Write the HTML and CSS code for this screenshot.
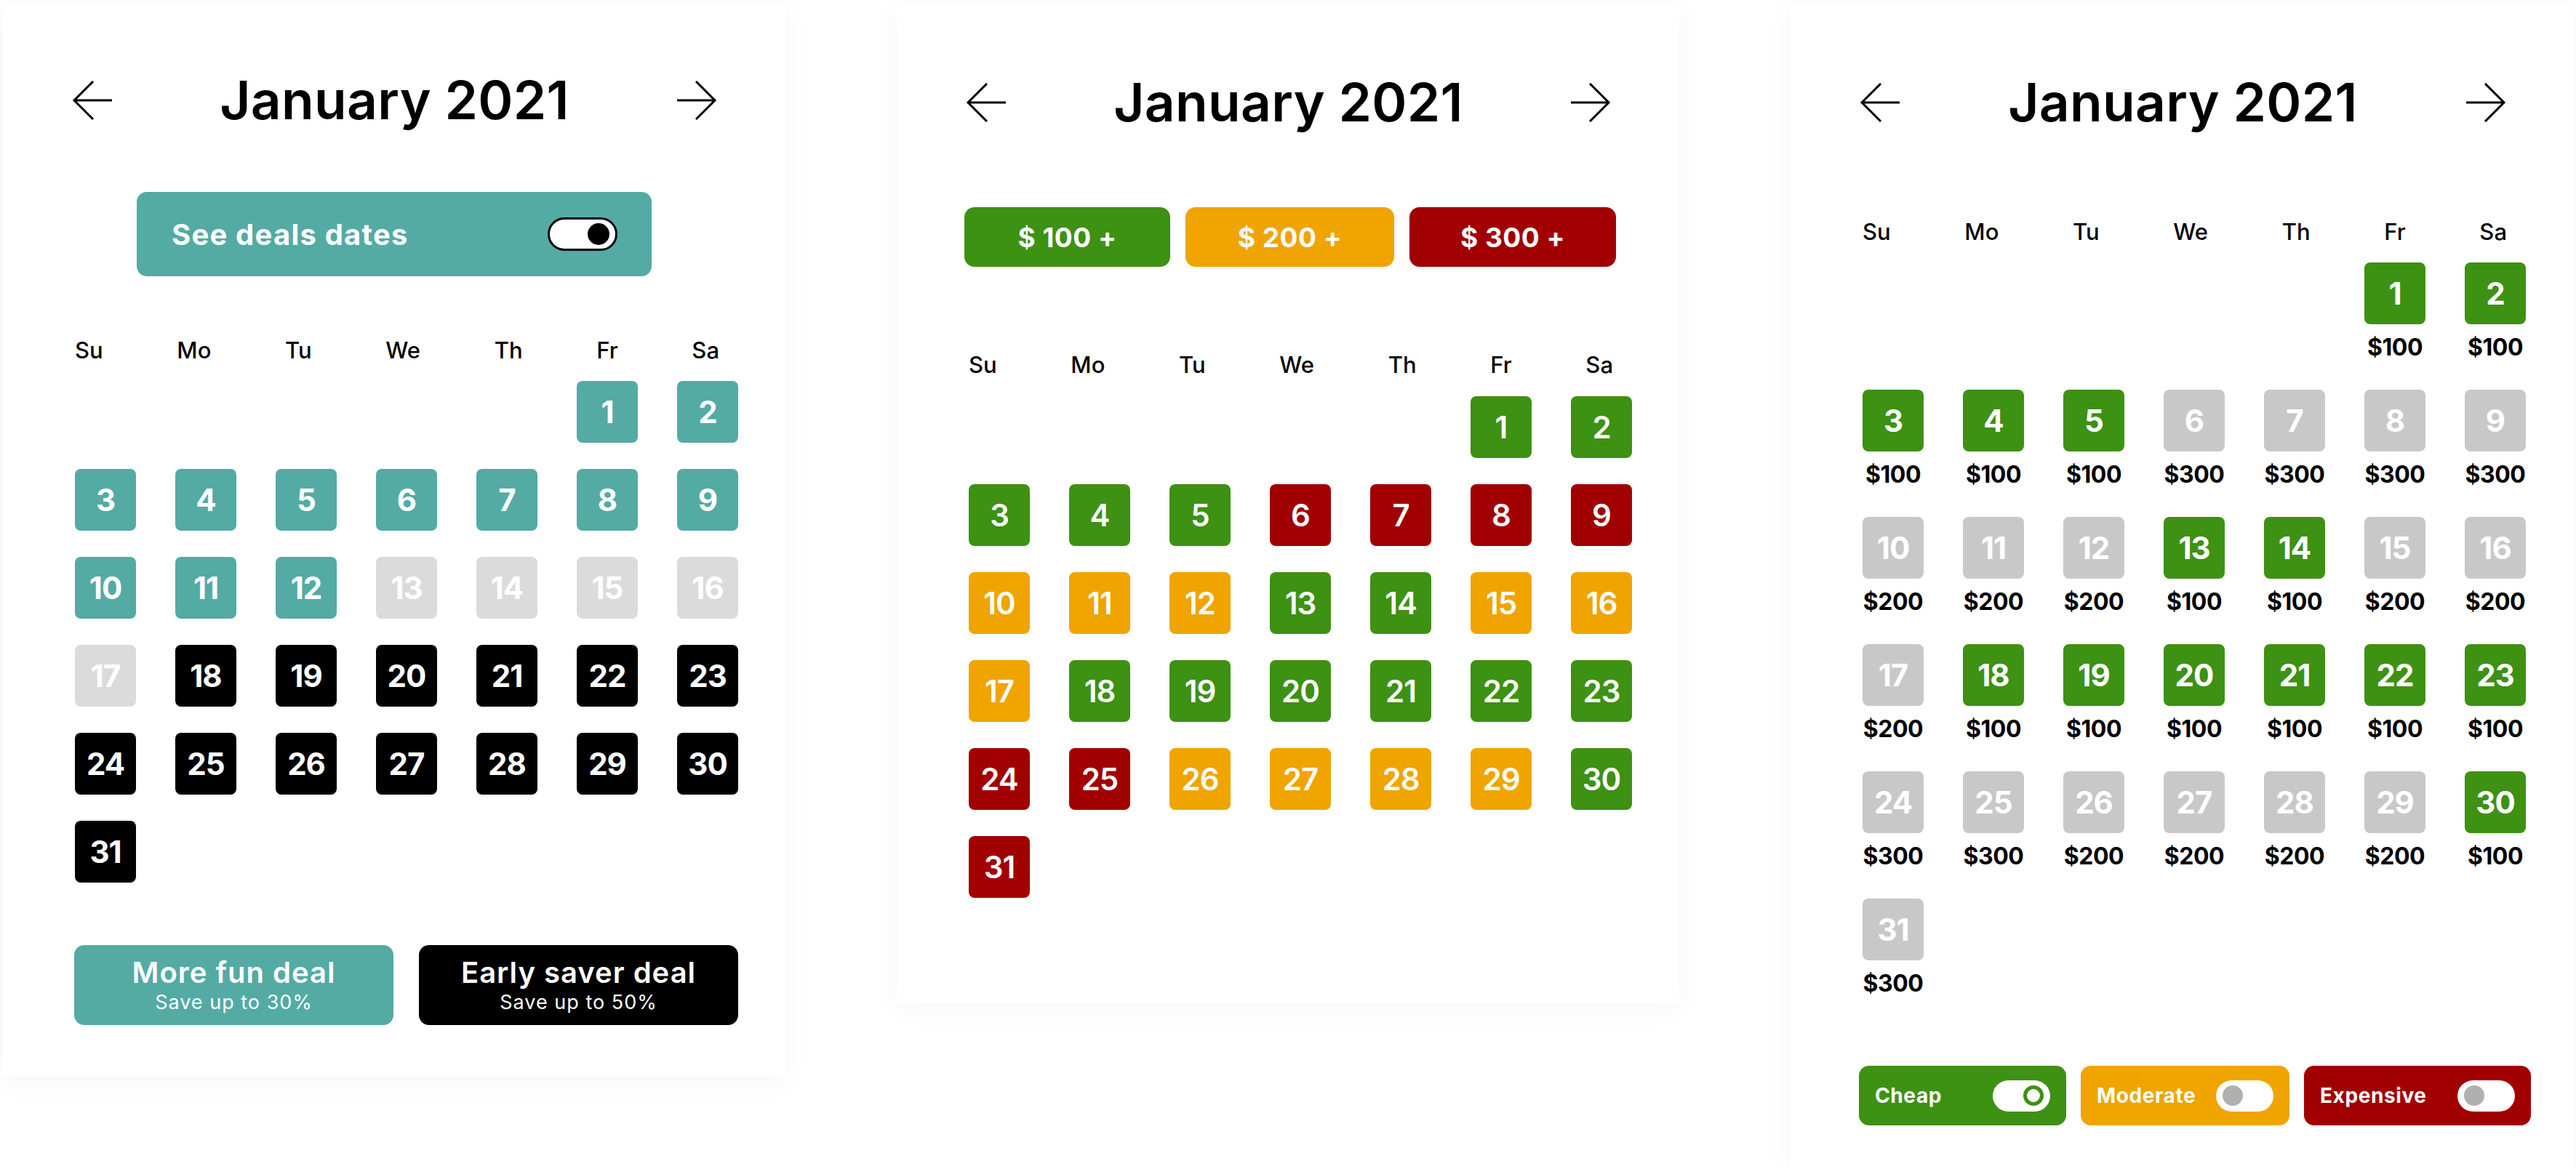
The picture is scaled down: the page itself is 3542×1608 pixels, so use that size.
FILE: index.html
```html
<!DOCTYPE html>
<html lang="en">
<head>
<meta charset="utf-8">
<title>Calendars</title>
<link rel="stylesheet" href="styles.css">
</head>
<body>
<div class="board">

  <!-- Panel 1 : deals -->
  <section class="panel panel-deals">
    <header class="cal-head">
      <svg class="arrow" viewBox="0 0 56 54" width="56" height="54"><path d="M55 27H3M29 1L3 27L29 53"/></svg>
      <h1 class="cal-title">January 2021</h1>
      <svg class="arrow" viewBox="0 0 56 54" width="56" height="54"><path d="M1 27H53M27 1L53 27L27 53"/></svg>
    </header>

    <div class="deal-banner">
      <span class="deal-banner-text">See deals dates</span>
      <span class="switch-dark"><span class="switch-dark-knob"></span></span>
    </div>

    <div class="weekdays"><span>Su</span><span>Mo</span><span>Tu</span><span>We</span><span>Th</span><span>Fr</span><span>Sa</span></div>

    <div class="days days-deals">
      <span class="day teal first">1</span><span class="day teal">2</span>
      <span class="day teal">3</span><span class="day teal">4</span><span class="day teal">5</span><span class="day teal">6</span><span class="day teal">7</span><span class="day teal">8</span><span class="day teal">9</span>
      <span class="day teal">10</span><span class="day teal">11</span><span class="day teal">12</span><span class="day light">13</span><span class="day light">14</span><span class="day light">15</span><span class="day light">16</span>
      <span class="day light">17</span><span class="day black">18</span><span class="day black">19</span><span class="day black">20</span><span class="day black">21</span><span class="day black">22</span><span class="day black">23</span>
      <span class="day black">24</span><span class="day black">25</span><span class="day black">26</span><span class="day black">27</span><span class="day black">28</span><span class="day black">29</span><span class="day black">30</span>
      <span class="day black">31</span>
    </div>

    <div class="deal-buttons">
      <div class="deal-btn teal"><span class="deal-btn-title">More fun deal</span><span class="deal-btn-sub">Save up to 30%</span></div>
      <div class="deal-btn black"><span class="deal-btn-title">Early saver deal</span><span class="deal-btn-sub">Save up to 50%</span></div>
    </div>
  </section>

  <!-- Panel 2 : price colours -->
  <section class="panel panel-prices">
    <header class="cal-head">
      <svg class="arrow" viewBox="0 0 56 54" width="56" height="54"><path d="M55 27H3M29 1L3 27L29 53"/></svg>
      <h1 class="cal-title">January 2021</h1>
      <svg class="arrow" viewBox="0 0 56 54" width="56" height="54"><path d="M1 27H53M27 1L53 27L27 53"/></svg>
    </header>

    <div class="price-tabs">
      <span class="price-tab green">$ 100 +</span>
      <span class="price-tab orange">$ 200 +</span>
      <span class="price-tab red">$ 300 +</span>
    </div>

    <div class="weekdays"><span>Su</span><span>Mo</span><span>Tu</span><span>We</span><span>Th</span><span>Fr</span><span>Sa</span></div>

    <div class="days days-prices">
      <span class="day green first">1</span><span class="day green">2</span>
      <span class="day green">3</span><span class="day green">4</span><span class="day green">5</span><span class="day red">6</span><span class="day red">7</span><span class="day red">8</span><span class="day red">9</span>
      <span class="day orange">10</span><span class="day orange">11</span><span class="day orange">12</span><span class="day green">13</span><span class="day green">14</span><span class="day orange">15</span><span class="day orange">16</span>
      <span class="day orange">17</span><span class="day green">18</span><span class="day green">19</span><span class="day green">20</span><span class="day green">21</span><span class="day green">22</span><span class="day green">23</span>
      <span class="day red">24</span><span class="day red">25</span><span class="day orange">26</span><span class="day orange">27</span><span class="day orange">28</span><span class="day orange">29</span><span class="day green">30</span>
      <span class="day red">31</span>
    </div>
  </section>

  <!-- Panel 3 : prices under days -->
  <section class="panel panel-filter">
    <header class="cal-head">
      <svg class="arrow" viewBox="0 0 56 54" width="56" height="54"><path d="M55 27H3M29 1L3 27L29 53"/></svg>
      <h1 class="cal-title">January 2021</h1>
      <svg class="arrow" viewBox="0 0 56 54" width="56" height="54"><path d="M1 27H53M27 1L53 27L27 53"/></svg>
    </header>

    <div class="weekdays"><span>Su</span><span>Mo</span><span>Tu</span><span>We</span><span>Th</span><span>Fr</span><span>Sa</span></div>

    <div class="days days-filter">
      <div class="pday first"><span class="day green">1</span><span class="price">$100</span></div>
      <div class="pday"><span class="day green">2</span><span class="price">$100</span></div>
      <div class="pday"><span class="day green">3</span><span class="price">$100</span></div>
      <div class="pday"><span class="day green">4</span><span class="price">$100</span></div>
      <div class="pday"><span class="day green">5</span><span class="price">$100</span></div>
      <div class="pday"><span class="day grey">6</span><span class="price">$300</span></div>
      <div class="pday"><span class="day grey">7</span><span class="price">$300</span></div>
      <div class="pday"><span class="day grey">8</span><span class="price">$300</span></div>
      <div class="pday"><span class="day grey">9</span><span class="price">$300</span></div>
      <div class="pday"><span class="day grey">10</span><span class="price">$200</span></div>
      <div class="pday"><span class="day grey">11</span><span class="price">$200</span></div>
      <div class="pday"><span class="day grey">12</span><span class="price">$200</span></div>
      <div class="pday"><span class="day green">13</span><span class="price">$100</span></div>
      <div class="pday"><span class="day green">14</span><span class="price">$100</span></div>
      <div class="pday"><span class="day grey">15</span><span class="price">$200</span></div>
      <div class="pday"><span class="day grey">16</span><span class="price">$200</span></div>
      <div class="pday"><span class="day grey">17</span><span class="price">$200</span></div>
      <div class="pday"><span class="day green">18</span><span class="price">$100</span></div>
      <div class="pday"><span class="day green">19</span><span class="price">$100</span></div>
      <div class="pday"><span class="day green">20</span><span class="price">$100</span></div>
      <div class="pday"><span class="day green">21</span><span class="price">$100</span></div>
      <div class="pday"><span class="day green">22</span><span class="price">$100</span></div>
      <div class="pday"><span class="day green">23</span><span class="price">$100</span></div>
      <div class="pday"><span class="day grey">24</span><span class="price">$300</span></div>
      <div class="pday"><span class="day grey">25</span><span class="price">$300</span></div>
      <div class="pday"><span class="day grey">26</span><span class="price">$200</span></div>
      <div class="pday"><span class="day grey">27</span><span class="price">$200</span></div>
      <div class="pday"><span class="day grey">28</span><span class="price">$200</span></div>
      <div class="pday"><span class="day grey">29</span><span class="price">$200</span></div>
      <div class="pday"><span class="day green">30</span><span class="price">$100</span></div>
      <div class="pday"><span class="day grey">31</span><span class="price">$300</span></div>
    </div>

    <div class="filters">
      <div class="filter green filter-cheap"><span>Cheap</span><span class="switch-light on"><span class="switch-light-knob"></span></span></div>
      <div class="filter orange filter-moderate"><span>Moderate</span><span class="switch-light"><span class="switch-light-knob"></span></span></div>
      <div class="filter red filter-expensive"><span>Expensive</span><span class="switch-light"><span class="switch-light-knob"></span></span></div>
    </div>
  </section>

</div>
</body>
</html>
```

FILE: styles.css
```css
* { box-sizing: border-box; }

html, body {
  margin: 0;
  padding: 0;
  background: #ffffff;
}

body {
  font-family: "Inter", "Noto Sans", "Liberation Sans", sans-serif;
  color: #000;
}

.board {
  display: flex;
  align-items: flex-start;
  gap: 153px;
  padding: 5px 0 0 4px;
}

.panel {
  width: 1076px;
  background: #fff;
  box-shadow: 0 6px 36px rgba(0, 0, 0, 0.045);
  display: flex;
  flex-direction: column;
}

.panel-deals { padding: 88px 0 71px 0; }
.panel-prices { padding: 91px 0 145px 0; }
.panel-filter { padding: 91px 0 58px 0; width: 1078px; }

/* header */
.cal-head {
  display: flex;
  align-items: center;
  justify-content: space-between;
  height: 90px;
  padding: 0 94px 0 95px;
}

.arrow {
  fill: none;
  stroke: #000;
  stroke-width: 3;
  stroke-linecap: butt;
  stroke-linejoin: miter;
  flex: none;
}

.cal-title {
  margin: 0;
  font-size: 73px;
  line-height: 90px;
  font-weight: 600;
  letter-spacing: 0.3px;
}

/* deal banner */
.deal-banner {
  align-self: center;
  margin-top: 81px;
  width: 708px;
  height: 116px;
  border-radius: 14px;
  background: #53aba4;
  display: flex;
  align-items: center;
  justify-content: space-between;
  padding: 0 47px 0 48px;
}

.deal-banner-text {
  color: #fff;
  font-size: 40px;
  font-weight: 700;
  letter-spacing: 1.2px;
}

.switch-dark {
  width: 96px;
  height: 46px;
  border: 3.5px solid #000;
  border-radius: 23px;
  background: #fff;
  display: flex;
  align-items: center;
  justify-content: flex-end;
  padding-right: 8px;
}

.switch-dark-knob {
  width: 30px;
  height: 30px;
  border-radius: 50%;
  background: #000;
}

/* weekdays */
.weekdays {
  width: 886px;
  margin-left: 99px;
  display: flex;
  justify-content: space-between;
  font-size: 31px;
  line-height: 36px;
  font-weight: 500;
}

.panel-deals .weekdays { margin-top: 84px; }
.panel-prices .weekdays { margin-top: 117px; }
.panel-filter .weekdays { margin-top: 115px; }

/* day grid */
.days {
  margin-left: 99px;
  display: grid;
  grid-template-columns: repeat(7, 84px);
  column-gap: 54px;
  row-gap: 36px;
}

.days-deals { margin-top: 24px; }
.days-prices { margin-top: 25px; }
.days-filter { margin-top: 24px; row-gap: 38px; }

.first { grid-column-start: 6; }

.day {
  width: 84px;
  height: 85px;
  border-radius: 8px;
  display: flex;
  align-items: center;
  justify-content: center;
  color: #fff;
  font-size: 42px;
  font-weight: 700;
  letter-spacing: -1px;
}

.days-prices .day { font-weight: 600; }

.teal { background: #53aba4; }
.light { background: #dbdbdb; }
.black { background: #000; }
.green { background: #3d9113; }
.orange { background: #f0a400; }
.red { background: #a10000; }
.grey { background: #c8c8c8; }

/* deal buttons */
.deal-buttons {
  margin: 86px 0 0 98px;
  width: 913px;
  display: grid;
  grid-template-columns: 1fr 1fr;
  column-gap: 35px;
}

.deal-btn {
  height: 110px;
  border-radius: 14px;
  display: flex;
  flex-direction: column;
  align-items: center;
  justify-content: center;
  color: #fff;
}

.deal-btn-title {
  font-size: 40px;
  line-height: 46px;
  font-weight: 600;
  letter-spacing: 1px;
}

.deal-btn-sub {
  font-size: 27px;
  line-height: 32px;
  font-weight: 400;
  letter-spacing: 1px;
  margin-top: 2px;
}

/* price tabs */
.price-tabs {
  margin: 99px 0 0 93px;
  width: 896px;
  display: grid;
  grid-template-columns: 283px 287px 284px;
  column-gap: 21px;
}

.price-tab {
  height: 82px;
  border-radius: 14px;
  display: flex;
  align-items: center;
  justify-content: center;
  color: #fff;
  font-size: 37px;
  font-weight: 700;
  letter-spacing: 0.5px;
}

/* price under day */
.pday {
  display: flex;
  flex-direction: column;
  align-items: center;
}

.price {
  margin-top: 12px;
  font-size: 32px;
  line-height: 40px;
  font-weight: 700;
  letter-spacing: -0.5px;
  white-space: nowrap;
}

/* filters */
.filters {
  margin: 93px 0 0 94px;
  display: flex;
  gap: 20px;
}

.filter {
  height: 82px;
  border-radius: 14px;
  display: flex;
  align-items: center;
  justify-content: space-between;
  padding: 0 22px;
  color: #fff;
  font-size: 28px;
  font-weight: 700;
  letter-spacing: 0.6px;
}

.filter-cheap { width: 285px; }
.filter-moderate { width: 287px; }
.filter-expensive { width: 312px; }

.switch-light {
  width: 79px;
  height: 43px;
  border-radius: 22px;
  background: #fff;
  display: flex;
  align-items: center;
  justify-content: flex-start;
  padding: 0 9px;
}

.switch-light.on { justify-content: flex-end; }

.switch-light-knob {
  width: 28px;
  height: 28px;
  border-radius: 50%;
  background: #b0b0b0;
}

.switch-light.on .switch-light-knob {
  background: #fff;
  border: 5px solid #3d9113;
}
```
